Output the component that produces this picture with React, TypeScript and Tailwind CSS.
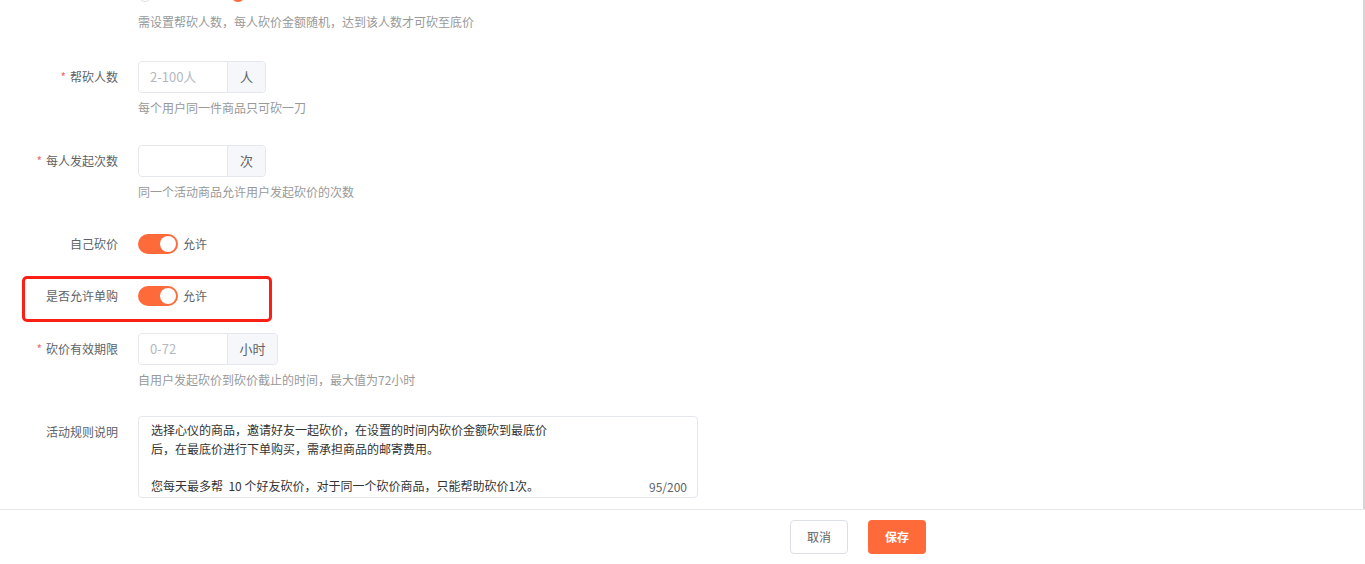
import React from 'react'

const font = 'font-["Microsoft_YaHei","Noto_Sans_CJK_SC",sans-serif]'

function Label({ text, required }: { text: string; required?: boolean }) {
  return (
    <div className="w-[118px] shrink-0 text-right text-[12px] leading-[18px] text-[#606266]">
      {required && <span className="mr-[4px] text-[#f56c6c]">*</span>}
      {text}
    </div>
  )
}

function Hint({ text, className = '' }: { text: string; className?: string }) {
  return (
    <div className={`ml-[138px] text-[12px] leading-[18px] text-[#999999] ${className}`}>{text}</div>
  )
}

function AddonInput({ placeholder, addon, addonWidth }: { placeholder: string; addon: string; addonWidth: string }) {
  return (
    <div className="flex h-[32px] rounded-[4px] border border-[#e4e7ed]">
      <input
        readOnly
        placeholder={placeholder}
        className="w-[88px] rounded-l-[4px] bg-white px-[11px] text-[13px] text-[#606266] outline-none placeholder:text-[#b4b8bf]"
      />
      <div
        className={`${addonWidth} flex items-center justify-center rounded-r-[4px] border-l border-[#e4e7ed] bg-[#f5f7fa] text-[13px] text-[#606266]`}
      >
        {addon}
      </div>
    </div>
  )
}

function Switch() {
  return (
    <div className="flex items-center gap-[5px]">
      <div className="flex h-[20px] w-[40px] items-center justify-end rounded-full bg-[#ff6a3b] pr-[2px]">
        <div className="h-[16px] w-[16px] rounded-full bg-white" />
      </div>
      <span className="text-[12px] text-[#606266]">允许</span>
    </div>
  )
}

function Row({ label, required, children, className = '' }: { label: string; required?: boolean; children: React.ReactNode; className?: string }) {
  return (
    <div className={`flex h-[32px] items-center ${className}`}>
      <Label text={label} required={required} />
      <div className="ml-[20px]">{children}</div>
    </div>
  )
}

const rules = '选择心仪的商品，邀请好友一起砍价，在设置的时间内砍价金额砍到最底价\n后，在最底价进行下单购买，需承担商品的邮寄费用。\n\n您每天最多帮  10 个好友砍价，对于同一个砍价商品，只能帮助砍价1次。'

export default function App() {
  return (
    <div className={`flex h-[564px] flex-col overflow-hidden bg-white ${font}`}>
      <div className="flex h-[509px] shrink-0 flex-col overflow-hidden border-r-2 border-[#d6d6d6]">
        {/* radio row, mostly scrolled out of view */}
        <div className="-mt-[21px] flex h-[32px] items-center">
          <div className="w-[118px]" />
          <div className="ml-[20px] flex items-center gap-[79px]">
            <span className="h-[14px] w-[14px] rounded-full border border-[#dcdfe6]" />
            <span className="h-[14px] w-[14px] rounded-full border-[4px] border-[#ff6a3b]" />
          </div>
        </div>
        <Hint className="mt-[2px]" text="需设置帮砍人数，每人砍价金额随机，达到该人数才可砍至底价" />

        <Row label="帮砍人数" required className="mt-[30px]">
          <AddonInput placeholder="2-100人" addon="人" addonWidth="w-[38px]" />
        </Row>
        <Hint className="mt-[6px]" text="每个用户同一件商品只可砍一刀" />

        <Row label="每人发起次数" required className="mt-[28px]">
          <AddonInput placeholder="" addon="次" addonWidth="w-[38px]" />
        </Row>
        <Hint className="mt-[6px]" text="同一个活动商品允许用户发起砍价的次数" />

        <Row label="自己砍价" className="mt-[27px]">
          <Switch />
        </Row>

        <div className="relative mt-[20px]">
          <Row label="是否允许单购">
            <Switch />
          </Row>
          <span className="pointer-events-none absolute left-[22px] top-[-4px] h-[46px] w-[250px] rounded-[5px] border-[3px] border-[#fa2016]" />
        </div>

        <Row label="砍价有效期限" required className="mt-[21px]">
          <AddonInput placeholder="0-72" addon="小时" addonWidth="w-[50px]" />
        </Row>
        <Hint className="mt-[6px]" text="自用户发起砍价到砍价截止的时间，最大值为72小时" />

        <div className="mt-[27px] flex items-start">
          <div className="pt-[7px]">
            <Label text="活动规则说明" />
          </div>
          <div className="relative ml-[20px] h-[82px] w-[560px] rounded-[4px] border border-[#e4e7ed]">
            <textarea
              readOnly
              value={rules}
              className="h-full w-full resize-none overflow-hidden bg-transparent px-[12px] pt-[4px] text-[12px] leading-[18.7px] text-[#333333] outline-none"
            />
            <span className="absolute bottom-[1px] right-[10px] text-[12px] text-[#606266]">95/200</span>
          </div>
        </div>
      </div>

      <div className="flex flex-1 items-center justify-center gap-[20px] border-t border-[#e8e8e8] pl-[351px]">
        <button className="h-[34px] w-[58px] rounded-[4px] border border-[#dcdfe6] bg-white text-[12px] text-[#606266]">
          取消
        </button>
        <button className="h-[34px] w-[58px] rounded-[4px] bg-[#ff6a3b] text-[12px] font-bold text-white">
          保存
        </button>
      </div>
    </div>
  )
}
